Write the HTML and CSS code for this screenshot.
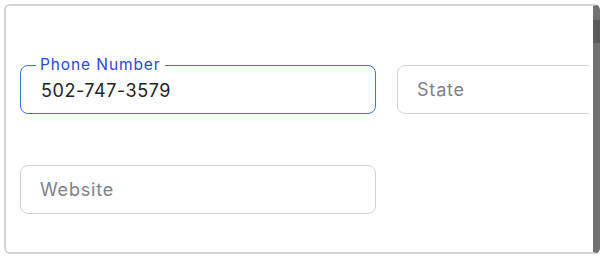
FILE: index.html
```html
<!DOCTYPE html>
<html lang="en">
<head>
<meta charset="utf-8">
<title>Contact form</title>
<link rel="stylesheet" href="styles.css">
</head>
<body>
<div class="frame">
  <div class="clip">
    <div class="grid">
      <div class="field focused">
        <span class="label">Phone Number</span>
        <span class="value">502-747-3579</span>
      </div>
      <div class="field">
        <span class="placeholder">State</span>
      </div>
      <div class="field">
        <span class="placeholder">Website</span>
      </div>
    </div>
  </div>
</div>
</body>
</html>
```
FILE: styles.css
```css
html, body {
  margin: 0;
  padding: 0;
  background: #ffffff;
}
body {
  font-family: Inter, "Noto Sans", sans-serif;
  width: 603px;
  height: 257px;
  overflow: hidden;
}
.frame {
  position: relative;
  box-sizing: border-box;
  margin: 4px 0 0 4px;
  width: 596px;
  height: 250px;
  border: 2px solid #d4d4d4;
  border-right: 7px solid #717171;
  border-radius: 6px;
  background: #fff;
}
.frame::after {
  content: "";
  position: absolute;
  right: -7px;
  top: 14px;
  width: 7px;
  height: 23px;
  background: #5a5a5a;
}
.clip {
  height: 100%;
  margin-right: 4px;
  overflow: hidden;
}
.grid {
  display: grid;
  grid-template-columns: 356px 356px;
  column-gap: 21px;
  row-gap: 51px;
  padding: 59px 0 0 14px;
}
.field {
  position: relative;
  box-sizing: border-box;
  height: 49px;
  border: 1px solid #d2d2d6;
  border-radius: 8px;
  display: flex;
  align-items: center;
  padding-left: 19px;
  font-size: 18px;
}
.field.focused {
  border-color: #3f6fe4;
  padding-left: 20px;
}
.label {
  position: absolute;
  left: 15px;
  top: -10px;
  padding: 0 4px 0 4px;
  background: #fff;
  color: #2c46d6;
  font-size: 15.5px;
  line-height: 18px;
  letter-spacing: 0.9px;
}
.value {
  color: #232326;
  letter-spacing: 0.55px;
  padding-top: 2px;
}
.placeholder {
  color: #80808a;
  letter-spacing: 0.8px;
}
```
